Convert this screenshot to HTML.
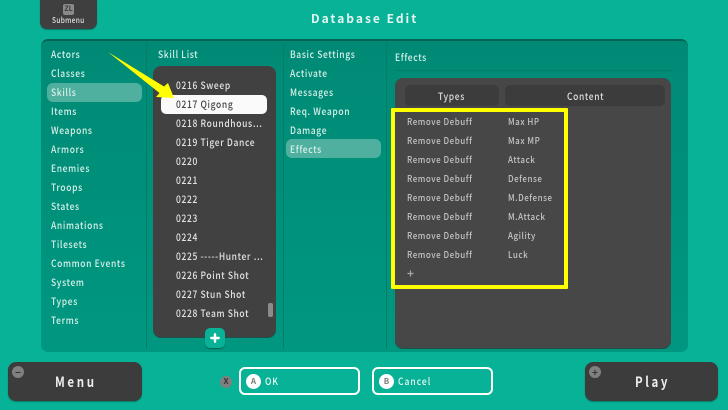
<!DOCTYPE html>
<html><head><meta charset="utf-8"><style>
html,body{margin:0;padding:0}
body{width:728px;height:410px;overflow:hidden;position:relative;background:#07b297;font-family:"Noto Sans CJK JP","Liberation Sans",sans-serif;font-weight:500}
div{position:absolute;box-sizing:border-box}
.t{white-space:nowrap;line-height:16px;height:16px;font-size:10px;letter-spacing:.75px}
.x{transform:scaleX(.85);transform-origin:0 50%}
.m{color:#d8f0ea}
.s{color:#e4e4e4}
.e{color:#c4c4c4;font-size:9px;letter-spacing:.6px;transform:scaleX(.89);transform-origin:0 50%}
.sep{top:43px;width:1px;height:306px;background:#047c69}
.dark{background:#414141;box-shadow:0 1px 0 #1f4f47}
.btn{background:#3c3c3c;border-radius:8px;box-shadow:0 1px 1px #057c69}
.out{border:2px solid #fff;border-radius:6px;height:28px;top:367px;width:121px}
.circ{width:15px;height:15px;border-radius:50%;background:#fff;color:#777;font-size:8px;font-weight:700;text-align:center;line-height:15px;top:5px;left:5px}
.gc{width:12px;height:12px;border-radius:50%;background:#808080;color:#333;font-size:10px;line-height:11px;text-align:center;font-weight:700}
</style></head><body>
<div style="left:40px;top:-6px;width:57px;height:35px;background:#3f3f3f;border-radius:7px;box-shadow:0 1px 1px #057c69"></div>
<div style="left:63px;top:4px;width:11px;height:11px;background:#8a8a8a;border-radius:2px;color:#3c3c3c;font-size:7px;line-height:11px;text-align:center;font-weight:700">ZL</div>
<div class="t" style="left:52px;top:13px;font-size:8px;color:#e0e0e0;letter-spacing:.4px;transform:scaleX(.82);transform-origin:0 50%">Submenu</div>
<div class="t" style="left:311px;top:11px;font-size:12px;font-weight:700;color:#e6f6f3;letter-spacing:2px">Database Edit</div>

<div style="left:41px;top:39px;width:647px;height:313px;border-radius:7px;background:linear-gradient(#008a75,#009780);border-top:2px solid #056355"></div>
<div class="sep" style="left:146px"></div><div class="sep" style="left:283px"></div><div class="sep" style="left:386px"></div>

<div style="left:47px;top:83px;width:95px;height:19px;border-radius:6px;background:#50b09f"></div>
<div class="t m x" style="left:51px;top:46px">Actors</div>
<div class="t m x" style="left:51px;top:65px">Classes</div>
<div class="t m x" style="left:51px;top:84px">Skills</div>
<div class="t m x" style="left:51px;top:103px">Items</div>
<div class="t m x" style="left:51px;top:122px">Weapons</div>
<div class="t m x" style="left:51px;top:141px">Armors</div>
<div class="t m x" style="left:51px;top:160px">Enemies</div>
<div class="t m x" style="left:51px;top:179px">Troops</div>
<div class="t m x" style="left:51px;top:198px">States</div>
<div class="t m x" style="left:51px;top:217px">Animations</div>
<div class="t m x" style="left:51px;top:236px">Tilesets</div>
<div class="t m x" style="left:51px;top:255px">Common Events</div>
<div class="t m x" style="left:51px;top:274px">System</div>
<div class="t m x" style="left:51px;top:293px">Types</div>
<div class="t m x" style="left:51px;top:312px">Terms</div>

<div class="t m x" style="left:158px;top:46px">Skill List</div>
<div class="dark" style="left:153px;top:66px;width:123px;height:271px;border-radius:8px"></div>
<div style="left:161px;top:95px;width:106px;height:19px;border-radius:5px;background:#fafafa"></div>
<div class="t s x" style="left:176px;top:77px">0216 Sweep</div>
<div class="t x" style="left:176px;top:96px;color:#444">0217 Qigong</div>
<div class="t s x" style="left:176px;top:115px">0218 Roundhous⋯</div>
<div class="t s x" style="left:176px;top:134px">0219 Tiger Dance</div>
<div class="t s x" style="left:176px;top:153px">0220</div>
<div class="t s x" style="left:176px;top:172px">0221</div>
<div class="t s x" style="left:176px;top:191px">0222</div>
<div class="t s x" style="left:176px;top:210px">0223</div>
<div class="t s x" style="left:176px;top:229px">0224</div>
<div class="t s x" style="left:176px;top:248px">0225 -----Hunter ⋯</div>
<div class="t s x" style="left:176px;top:267px">0226 Point Shot</div>
<div class="t s x" style="left:176px;top:286px">0227 Stun Shot</div>
<div class="t s x" style="left:176px;top:305px">0228 Team Shot</div>
<div style="left:268px;top:303px;width:5px;height:14px;border-radius:2px;background:#8c8c8c"></div>
<div style="left:205px;top:328px;width:20px;height:20px;border-radius:5px;background:#07b297;box-shadow:0 1px 1px #056355"></div>
<svg style="position:absolute;left:205px;top:328px" width="20" height="20"><path d="M10 6.3v7.4M6.3 10h7.4" stroke="#fff" stroke-width="2.4" stroke-linecap="round"/></svg>

<div style="left:286px;top:139px;width:95px;height:19px;border-radius:6px;background:#50b09f"></div>
<div class="t m x" style="left:290px;top:46px">Basic Settings</div>
<div class="t m x" style="left:290px;top:65px">Activate</div>
<div class="t m x" style="left:290px;top:84px">Messages</div>
<div class="t m x" style="left:290px;top:103px">Req. Weapon</div>
<div class="t m x" style="left:290px;top:122px">Damage</div>
<div class="t m x" style="left:290px;top:141px">Effects</div>

<div class="t m x" style="left:395px;top:49px">Effects</div>
<div style="left:395px;top:70px;width:277px;height:1px;background:#047c69"></div>
<div class="dark" style="left:395px;top:78px;width:276px;height:270px;border-radius:8px;background:#474747"></div>
<div style="left:405px;top:85px;width:94px;height:21px;border-radius:5px;background:#3c3c3c"></div>
<div style="left:505px;top:85px;width:160px;height:21px;border-radius:5px;background:#3c3c3c"></div>
<div class="t x" style="left:438px;top:88px;color:#ddd">Types</div>
<div class="t x" style="left:567px;top:88px;color:#ddd">Content</div>

<div class="t e" style="left:407px;top:114px">Remove Debuff</div><div class="t e" style="left:508px;top:114px">Max HP</div>
<div class="t e" style="left:407px;top:133px">Remove Debuff</div><div class="t e" style="left:508px;top:133px">Max MP</div>
<div class="t e" style="left:407px;top:152px">Remove Debuff</div><div class="t e" style="left:508px;top:152px">Attack</div>
<div class="t e" style="left:407px;top:171px">Remove Debuff</div><div class="t e" style="left:508px;top:171px">Defense</div>
<div class="t e" style="left:407px;top:190px">Remove Debuff</div><div class="t e" style="left:508px;top:190px">M.Defense</div>
<div class="t e" style="left:407px;top:209px">Remove Debuff</div><div class="t e" style="left:508px;top:209px">M.Attack</div>
<div class="t e" style="left:407px;top:228px">Remove Debuff</div><div class="t e" style="left:508px;top:228px">Agility</div>
<div class="t e" style="left:407px;top:247px">Remove Debuff</div><div class="t e" style="left:508px;top:247px">Luck</div>
<svg style="position:absolute;left:407px;top:270px" width="8" height="8"><path d="M3.5 .5v6M.5 3.5h6" stroke="#a8a8a8" stroke-width="1.2"/></svg>
<div style="left:391px;top:108px;width:177px;height:181px;border:4px solid #ffff00;border-radius:1px"></div>

<svg style="position:absolute;left:100px;top:45px" width="80" height="60"><path d="M8 7L64 41.5L68 38L74 53L56 52L59.500 48Z" fill="#ffff00"/></svg>

<div class="btn" style="left:8px;top:362px;width:134px;height:39px"></div>
<div class="gc" style="left:12px;top:366px">−</div>
<div class="t" style="left:55px;top:372px;height:20px;line-height:20px;font-size:14px;font-weight:700;color:#eee;letter-spacing:3.2px;transform:scaleX(.82);transform-origin:0 50%">Menu</div>
<div class="btn" style="left:585px;top:362px;width:133px;height:39px"></div>
<div class="gc" style="left:589px;top:366px">+</div>
<div class="t" style="left:635px;top:372px;height:20px;line-height:20px;font-size:14px;font-weight:700;color:#eee;letter-spacing:3.2px;transform:scaleX(.82);transform-origin:0 50%">Play</div>
<div class="gc" style="left:220px;top:376px;color:#333;font-size:8px;line-height:12px">X</div>
<div class="out" style="left:239px"><div class="circ">A</div><div class="t x" style="left:24px;top:4px;color:#e8f7f4;letter-spacing:1px">OK</div></div>
<div class="out" style="left:372px"><div class="circ">B</div><div class="t x" style="left:24px;top:4px;color:#e8f7f4;letter-spacing:1.2px">Cancel</div></div>
</body></html>
